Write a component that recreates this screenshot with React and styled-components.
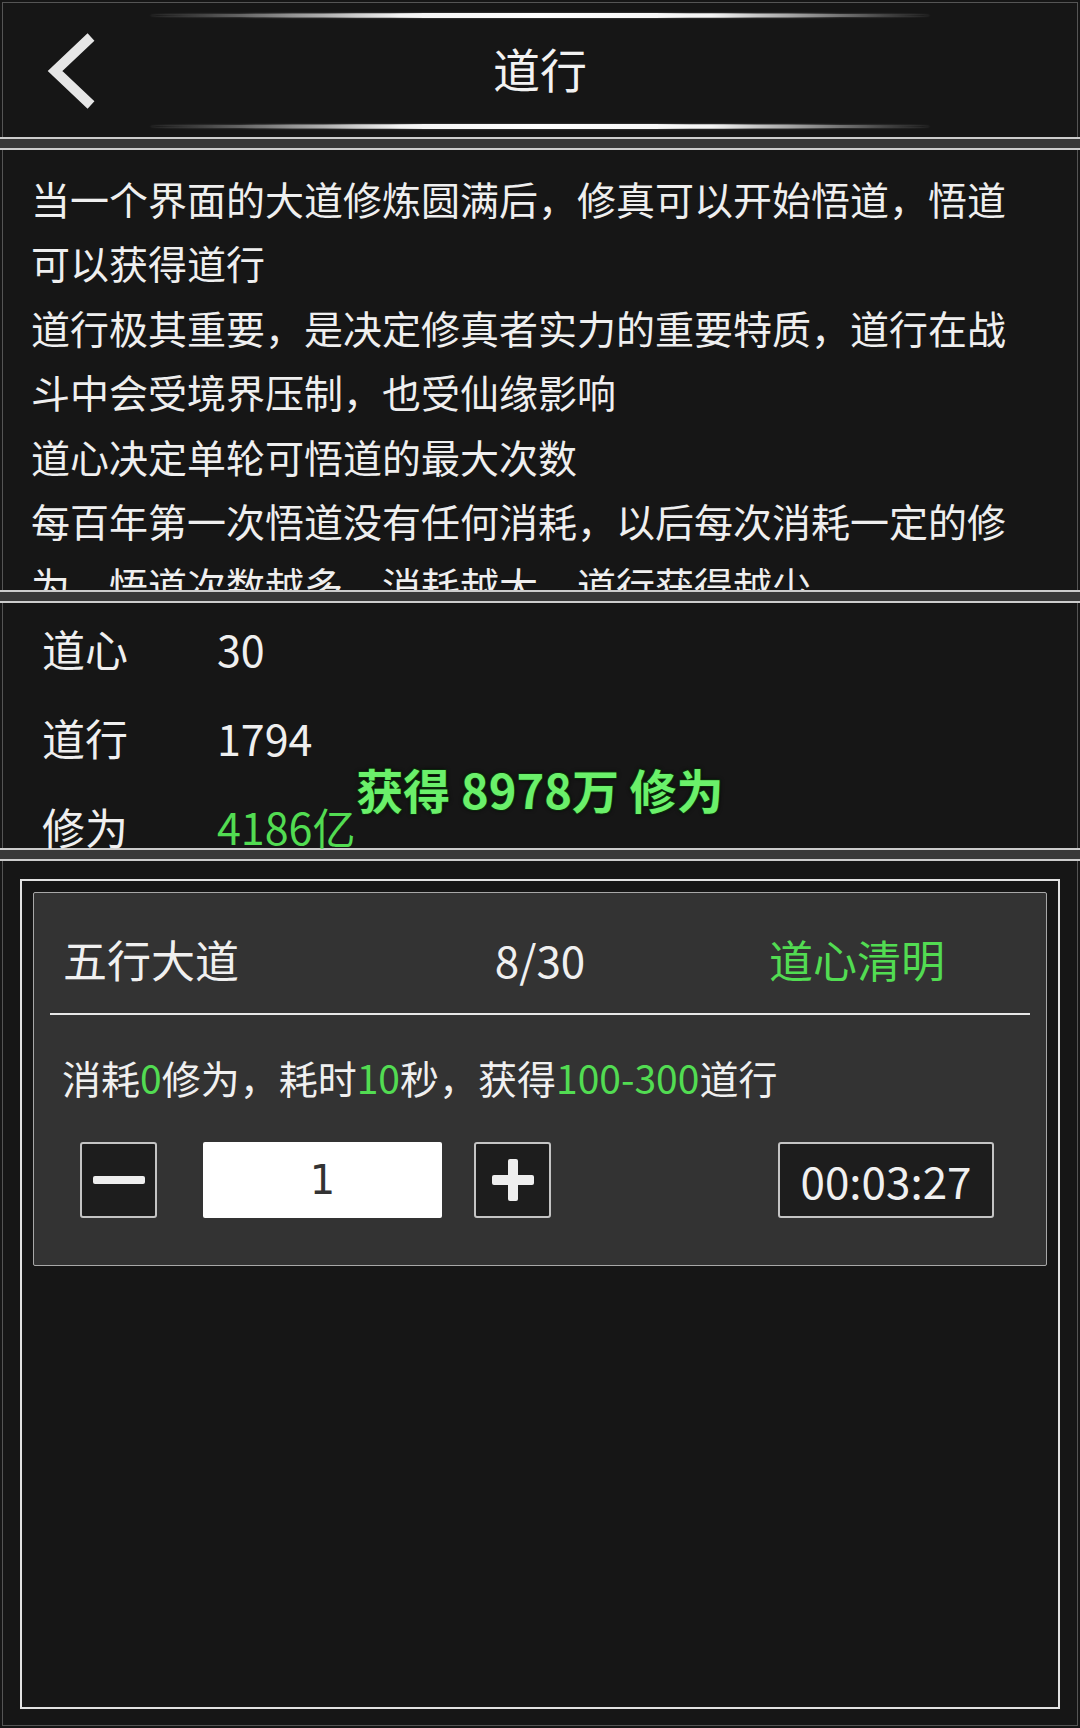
import React from "react";
import styled, { createGlobalStyle } from "styled-components";

const GlobalStyle = createGlobalStyle`
  body {
    margin: 0;
    background: #161616;
    font-family: "Noto Sans CJK SC", "Noto Sans", sans-serif;
  }
`;

const stats = [
  { label: "道心", value: "30" },
  { label: "道行", value: "1794" },
  { label: "修为", value: "4186亿", green: true },
];

const App = () => {
  const [count, setCount] = React.useState(1);

  return (
    <Page>
      <GlobalStyle />
      <Header>
        <GlowLine />
        <NavRow>
          <BackButton aria-label="back">
            <svg width="56" height="80" viewBox="0 0 56 80">
              <polyline
                points="48,6 12,40 48,74"
                fill="none"
                stroke="#e6e6e6"
                strokeWidth="10"
                strokeLinejoin="miter"
              />
            </svg>
          </BackButton>
          <Title>道行</Title>
        </NavRow>
        <GlowLine />
      </Header>

      <Divider />

      <Description>
        <p>当一个界面的大道修炼圆满后，修真可以开始悟道，悟道可以获得道行</p>
        <p>道行极其重要，是决定修真者实力的重要特质，道行在战斗中会受境界压制，也受仙缘影响</p>
        <p>道心决定单轮可悟道的最大次数</p>
        <p>每百年第一次悟道没有任何消耗，以后每次消耗一定的修为，悟道次数越多，消耗越大，道行获得越少</p>
      </Description>

      <Divider />

      <StatsPanel>
        {stats.map((s) => (
          <StatRow key={s.label}>
            <span>{s.label}</span>
            <StatValue $green={s.green}>{s.value}</StatValue>
          </StatRow>
        ))}
        <Toast>获得 8978万 修为</Toast>
      </StatsPanel>

      <Divider />

      <BottomPanel>
        <Frame>
          <Card>
            <CardHeader>
              <span>五行大道</span>
              <Progress>8/30</Progress>
              <State>道心清明</State>
            </CardHeader>
            <Rule />
            <Info>
              消耗<Hi>0</Hi>修为，耗时<Hi>10</Hi>秒，获得<Hi>100-300</Hi>道行
            </Info>
            <Controls>
              <StepButton onClick={() => setCount(Math.max(1, count - 1))}>
                <svg width="52" height="10" viewBox="0 0 52 10">
                  <rect x="0" y="1" width="52" height="8" rx="2" fill="#eeeeee" />
                </svg>
              </StepButton>
              <CountBox>{count}</CountBox>
              <StepButton onClick={() => setCount(count + 1)}>
                <svg width="42" height="42" viewBox="0 0 42 42">
                  <rect x="0" y="16" width="42" height="10" rx="2" fill="#eeeeee" />
                  <rect x="16" y="0" width="10" height="42" rx="2" fill="#eeeeee" />
                </svg>
              </StepButton>
              <Timer>00:03:27</Timer>
            </Controls>
          </Card>
        </Frame>
      </BottomPanel>
    </Page>
  );
};

const Page = styled.div`
  width: 1080px;
  height: 1728px;
  background: #161616;
  display: flex;
  flex-direction: column;
  color: #f0f0f0;
  overflow: hidden;
`;

const Panel = styled.div`
  margin: 0 2px;
  border-left: 1px solid #555;
  border-right: 1px solid #555;
  background: #161616;
  box-sizing: border-box;
`;

const Header = styled(Panel)`
  margin-top: 2px;
  border-top: 1px solid #555;
  height: 135px;
  display: flex;
  flex-direction: column;
  align-items: center;
  padding-top: 10px;
`;

const GlowLine = styled.div`
  width: 780px;
  height: 5px;
  border-radius: 50%;
  background: linear-gradient(
    90deg,
    rgba(255, 255, 255, 0) 0%,
    rgba(255, 255, 255, 0.35) 12%,
    #f4f4f4 32%,
    #ffffff 50%,
    #f4f4f4 72%,
    rgba(255, 255, 255, 0.35) 90%,
    rgba(255, 255, 255, 0) 100%
  );
  box-shadow: 0 0 2px rgba(255, 255, 255, 0.35);
`;

const NavRow = styled.div`
  width: 100%;
  height: 106px;
  display: grid;
  grid-template-columns: 1fr auto 1fr;
  align-items: center;
`;

const BackButton = styled.div`
  justify-self: start;
  margin-left: 40px;
  display: flex;
  align-items: center;
`;

const Title = styled.div`
  font-size: 47px;
  color: #f2f2f2;
  line-height: 1;
  margin-bottom: 8px;
`;

const Divider = styled.div`
  height: 9px;
  background: #383838;
  border-top: 2px solid #cccccc;
  border-bottom: 2px solid #cccccc;
  flex-shrink: 0;
`;

const Description = styled(Panel)`
  height: 440px;
  flex-shrink: 0;
  padding: 16px 48px 0 28px;
  font-size: 39px;
  line-height: 64.4px;
  color: #efefef;

  p {
    margin: 0;
  }
`;

const StatsPanel = styled(Panel)`
  position: relative;
  height: 245px;
  flex-shrink: 0;
  padding: 0 0 0 39px;
`;

const StatRow = styled.div`
  display: grid;
  grid-template-columns: 175px auto;
  height: 89px;
  align-items: center;
  font-size: 43px;
  color: #efefef;
`;

const StatValue = styled.span`
  color: ${(p) => (p.$green ? "#52dc52" : "#efefef")};
`;

const Toast = styled.div`
  position: absolute;
  left: 50%;
  top: 158px;
  transform: translateX(-50%);
  font-size: 47px;
  font-weight: bold;
  line-height: 56px;
  white-space: nowrap;
  color: #6af06a;
  text-shadow: 1px 1px 0 #0a2a0a, -1px -1px 0 #0a2a0a, 1px -1px 0 #0a2a0a,
    -1px 1px 0 #0a2a0a, 0 0 4px #000;
`;

const BottomPanel = styled(Panel)`
  flex: 1;
  margin-bottom: 2px;
  border-bottom: 1px solid #555;
  padding: 18px 17px 0;
`;

const Frame = styled.div`
  height: 830px;
  box-sizing: border-box;
  border: 2px solid #e2e2e2;
  padding: 11px;
`;

const Card = styled.div`
  background: #333333;
  border: 1px solid #a8a8a8;
  border-radius: 2px;
  padding: 16px 0 47px;
`;

const CardHeader = styled.div`
  display: grid;
  grid-template-columns: 1fr auto 1fr;
  align-items: center;
  height: 100px;
  padding: 0 29px;
  font-size: 44px;
  color: #f0f0f0;
`;

const Progress = styled.span`
  text-align: center;
`;

const State = styled.span`
  justify-self: end;
  margin-right: 72px;
  color: #52dc52;
`;

const Rule = styled.div`
  height: 2px;
  margin: 4px 16px 0;
  background: #e8e8e8;
`;

const Info = styled.div`
  margin-top: 37px;
  padding-left: 28px;
  font-size: 39px;
  line-height: 50px;
  color: #f0f0f0;
`;

const Hi = styled.span`
  color: #52dc52;
`;

const Controls = styled.div`
  display: flex;
  align-items: center;
  margin-top: 40px;
  padding: 0 52px 0 46px;
  height: 76px;
`;

const StepButton = styled.div`
  width: 77px;
  height: 76px;
  box-sizing: border-box;
  background: #1d1d1d;
  border: 2px solid #c4c4c4;
  border-radius: 3px;
  display: flex;
  align-items: center;
  justify-content: center;
  cursor: pointer;
`;

const CountBox = styled.div`
  width: 239px;
  height: 76px;
  margin: 0 32px 0 46px;
  background: #ffffff;
  border-radius: 2px;
  display: flex;
  align-items: center;
  justify-content: center;
  font-family: "DejaVu Sans", sans-serif;
  font-size: 40px;
  color: #333;
`;

const Timer = styled.div`
  margin-left: auto;
  width: 216px;
  height: 76px;
  box-sizing: border-box;
  background: #1d1d1d;
  border: 2px solid #c4c4c4;
  border-radius: 3px;
  display: flex;
  align-items: center;
  justify-content: center;
  font-size: 44px;
  color: #f0f0f0;
`;

export default App;
